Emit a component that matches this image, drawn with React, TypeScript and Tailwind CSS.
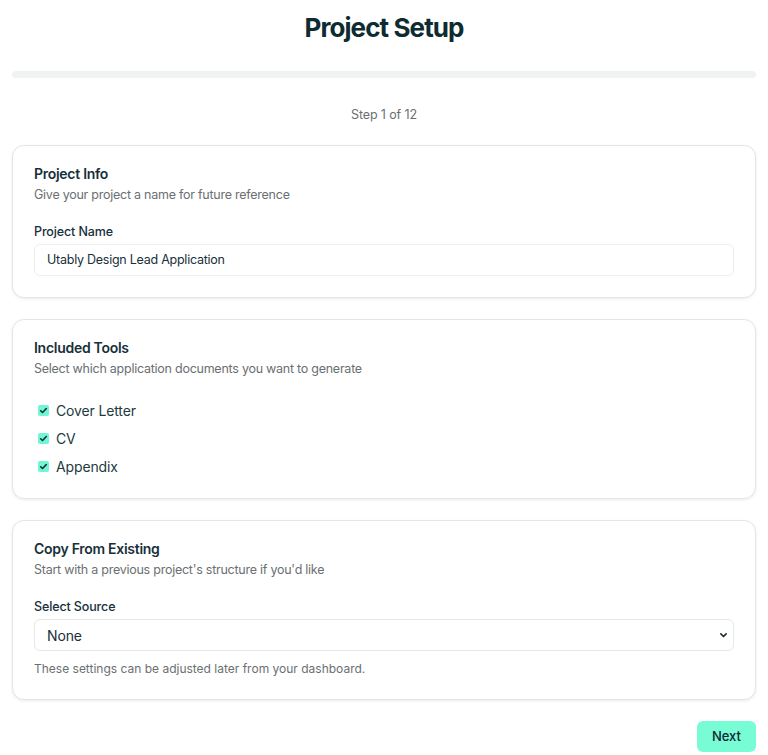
import React from "react";

const tools = ["Cover Letter", "CV", "Appendix"];

const Card: React.FC<{ title: string; subtitle: string; children: React.ReactNode }> = ({
  title,
  subtitle,
  children,
}) => (
  <div className="rounded-xl border border-[#e4e6e6] bg-white px-[21px] pt-[18px] pb-[21px] shadow-[0_1px_3px_rgba(0,0,0,0.08)]">
    <h2 className="text-[14px] font-semibold leading-5 tracking-[-0.02em] text-[#17303a]">{title}</h2>
    <p className="mt-0.5 text-[12.5px] leading-[18px] tracking-[-0.02em] text-[#6b6f72]">{subtitle}</p>
    {children}
  </div>
);

export default function App() {
  return (
    <div className="min-h-screen bg-white px-3 pt-3 pb-1 font-['Inter',sans-serif] text-[#17303a]">
      <h1 className="text-center text-[26px] font-bold leading-8 tracking-[-0.035em] text-[#0e2b31]">
        Project Setup
      </h1>
      <div className="mt-[27px] h-[7px] w-full rounded-full bg-[#f1f2f2]" />
      <p className="mt-[28px] text-center text-[12.5px] leading-[18px] tracking-[-0.01em] text-[#6b6f72]">
        Step 1 of 12
      </p>

      <div className="mt-[21px] flex flex-col gap-[21px]">
        <Card title="Project Info" subtitle="Give your project a name for future reference">
          <label className="mt-[18px] block text-[12.5px] font-medium leading-5 tracking-[-0.01em] text-[#17303a]">
            Project Name
          </label>
          <div className="mt-[2px] flex h-8 items-center rounded-md border border-[#eceeee] px-3 text-[12.5px] tracking-[-0.02em] text-[#17303a]">
            Utably Design Lead Application
          </div>
        </Card>

        <Card title="Included Tools" subtitle="Select which application documents you want to generate">
          <div className="mt-[21px] flex flex-col gap-1.5">
            {tools.map((t) => (
              <label key={t} className="flex h-[22px] items-center gap-[7px] pl-1">
                <span className="flex h-[11px] w-[11px] items-center justify-center rounded-[2px] bg-[#6ff6d2]">
                  <svg viewBox="0 0 12 12" className="h-[9px] w-[9px]" fill="none">
                    <path
                      d="M2.2 6.3 4.7 8.7 9.8 3.3"
                      stroke="#10262c"
                      strokeWidth="2"
                      strokeLinecap="round"
                      strokeLinejoin="round"
                    />
                  </svg>
                </span>
                <span className="text-[14px] tracking-[-0.01em] text-[#233a40]">{t}</span>
              </label>
            ))}
          </div>
        </Card>

        <Card title="Copy From Existing" subtitle="Start with a previous project's structure if you'd like">
          <label className="mt-[18px] block text-[12.5px] font-medium leading-5 tracking-[-0.01em] text-[#17303a]">
            Select Source
          </label>
          <div className="relative mt-[2px]">
            <select className="h-8 w-full appearance-none rounded-md border border-[#e6e8e8] bg-white px-3 text-[14px] tracking-[-0.01em] text-[#17303a] outline-none">
              <option>None</option>
            </select>
            <svg
              viewBox="0 0 12 12"
              className="pointer-events-none absolute right-[6px] top-1/2 h-[9px] w-[9px] -translate-y-1/2"
              fill="none"
            >
              <path
                d="M2.5 4.5 6 8 9.5 4.5"
                stroke="#1f2d33"
                strokeWidth="2.2"
                strokeLinecap="round"
                strokeLinejoin="round"
              />
            </svg>
          </div>
          <p className="mt-[9px] text-[12px] leading-[18px] text-[#6b6f72]">
            These settings can be adjusted later from your dashboard.
          </p>
        </Card>
      </div>

      <div className="mt-[21px] flex justify-end">
        <button className="h-[31px] rounded-md bg-[#77fcd6] px-[15px] text-[13px] font-medium text-[#10262c]">
          Next
        </button>
      </div>
    </div>
  );
}
